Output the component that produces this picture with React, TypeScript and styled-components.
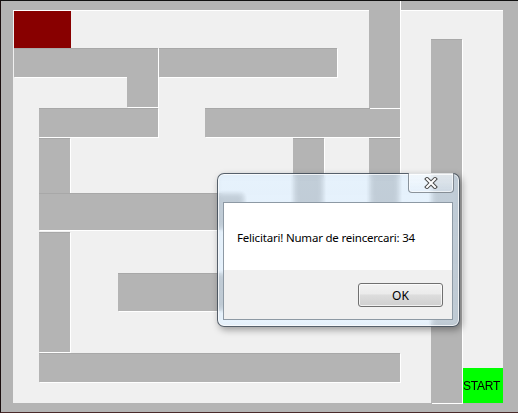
import React from "react";
import styled, { createGlobalStyle } from "styled-components";

const GlobalStyle = createGlobalStyle`
  html, body { margin: 0; padding: 0; background: #b4b4b4; }
  body { font-family: "Liberation Sans", Arial, sans-serif; }
`;

const Window = styled.div`
  position: relative;
  box-sizing: border-box;
  width: 518px;
  height: 413px;
  padding: 9px 15px 9px 12px;
  background: #b4b4b4;
  border-top: 1px solid #111;
  border-left: 1px solid #1c1010;
  border-bottom: 1px solid #4a2a2a;
  overflow: hidden;
`;

const Field = styled.div`
  position: relative;
  width: 490px;
  height: 393px;
  background: #f0f0f0;
  box-shadow: inset 0 1px 0 #ffffff;
`;

const Wall = styled.div<{ $x: number; $y: number; $w: number; $h: number }>`
  position: absolute;
  left: ${(p) => p.$x}px;
  top: ${(p) => p.$y}px;
  width: ${(p) => p.$w}px;
  height: ${(p) => p.$h}px;
  background: #b4b4b4;
  box-shadow: 1px 1px 0 #ffffff, inset 0 1px 0 #a8a8a8;
`;

const Goal = styled.div`
  position: absolute;
  left: 1px;
  top: 1px;
  width: 57px;
  height: 37px;
  background: #880000;
`;

const Start = styled.div`
  position: absolute;
  left: 450px;
  top: 358px;
  width: 40px;
  height: 35px;
  background: #00ff00;
  display: flex;
  align-items: center;
  font-family: "Liberation Sans", Arial, sans-serif;
  font-size: 12px;
  color: #000;
  letter-spacing: -0.2px;
`;

const Dialog = styled.div`
  position: absolute;
  left: 204px;
  top: 163px;
  box-sizing: border-box;
  width: 243px;
  height: 154px;
  padding: 28px 6px 6px 5px;
  border: 1px solid rgba(40, 50, 60, 0.75);
  border-radius: 7px;
  background: linear-gradient(180deg, rgba(175, 212, 245, 0.32), rgba(170, 210, 245, 0.28));
  backdrop-filter: blur(3px) brightness(1.12);
  box-shadow: inset 0 0 0 1px rgba(255, 255, 255, 0.75), 2px 3px 7px rgba(0, 0, 0, 0.35);
`;

const CloseButton = styled.div`
  position: absolute;
  right: 5px;
  top: -1px;
  box-sizing: border-box;
  width: 46px;
  height: 20px;
  border: 1px solid rgba(70, 80, 90, 0.6);
  border-top: none;
  border-radius: 0 0 4px 4px;
  background: linear-gradient(180deg, rgba(255, 255, 255, 0.55), rgba(230, 240, 250, 0.35));
  box-shadow: inset 0 0 0 1px rgba(255, 255, 255, 0.6);
  display: flex;
  align-items: center;
  justify-content: center;
`;

const Client = styled.div`
  box-sizing: border-box;
  width: 230px;
  height: 118px;
  border: 1px solid #8d99a4;
  display: flex;
  flex-direction: column;
  background: #f0f0f0;
`;

const MessageArea = styled.div`
  height: 67px;
  background: #ffffff;
  display: flex;
  align-items: center;
  padding-left: 13px;
  font-family: "Segoe UI", "Noto Sans", sans-serif;
  font-size: 11.5px;
  letter-spacing: -0.2px;
  color: #000;
  padding-top: 1px;
  box-sizing: border-box;
`;

const Footer = styled.div`
  flex: 1;
  display: flex;
  align-items: center;
  justify-content: flex-end;
  padding-right: 9px;
  background: #f0f0f0;
`;

const OkButton = styled.button`
  box-sizing: border-box;
  width: 85px;
  height: 24px;
  margin-top: 1px;
  border: 1px solid #707070;
  border-radius: 3px;
  background: linear-gradient(180deg, #f2f2f2 0%, #ebebeb 45%, #dddddd 50%, #cfcfcf 100%);
  box-shadow: inset 0 0 0 1px rgba(255, 255, 255, 0.7);
  font-family: "Segoe UI", "Noto Sans", sans-serif;
  font-size: 12px;
  color: #000;
  padding: 0;
`;

const walls = [
  { x: 1, y: 38, w: 113, h: 29 },
  { x: 114, y: 38, w: 31, h: 59 },
  { x: 146, y: 38, w: 178, h: 29 },
  { x: 26, y: 98, w: 119, h: 29 },
  { x: 192, y: 98, w: 195, h: 29 },
  { x: 356, y: -10, w: 31, h: 108 },
  { x: 418, y: 29, w: 31, h: 364 },
  { x: 26, y: 128, w: 31, h: 55 },
  { x: 26, y: 183, w: 206, h: 37 },
  { x: 26, y: 222, w: 31, h: 120 },
  { x: 105, y: 263, w: 195, h: 38 },
  { x: 26, y: 343, w: 361, h: 29 },
  { x: 280, y: 128, w: 31, h: 70 },
  { x: 356, y: 128, w: 31, h: 70 },
];

const CloseGlyph = () => (
  <svg width="14" height="12" viewBox="0 0 14 12">
    <path
      d="M3 2 L11 10 M11 2 L3 10"
      stroke="#4a4a4a"
      strokeWidth="4"
      strokeLinecap="square"
      fill="none"
    />
    <path
      d="M3 2 L11 10 M11 2 L3 10"
      stroke="#ffffff"
      strokeWidth="2"
      strokeLinecap="square"
      fill="none"
    />
  </svg>
);

export default function App() {
  return (
    <>
      <GlobalStyle />
      <Window>
        <Field>
          <Goal />
          {walls.map((w, i) => (
            <Wall key={i} $x={w.x} $y={w.y} $w={w.w} $h={w.h} />
          ))}
          <Start>START</Start>
          <Dialog>
            <CloseButton>
              <CloseGlyph />
            </CloseButton>
            <Client>
              <MessageArea>Felicitari! Numar de reincercari: 34</MessageArea>
              <Footer>
                <OkButton>OK</OkButton>
              </Footer>
            </Client>
          </Dialog>
        </Field>
      </Window>
    </>
  );
}
